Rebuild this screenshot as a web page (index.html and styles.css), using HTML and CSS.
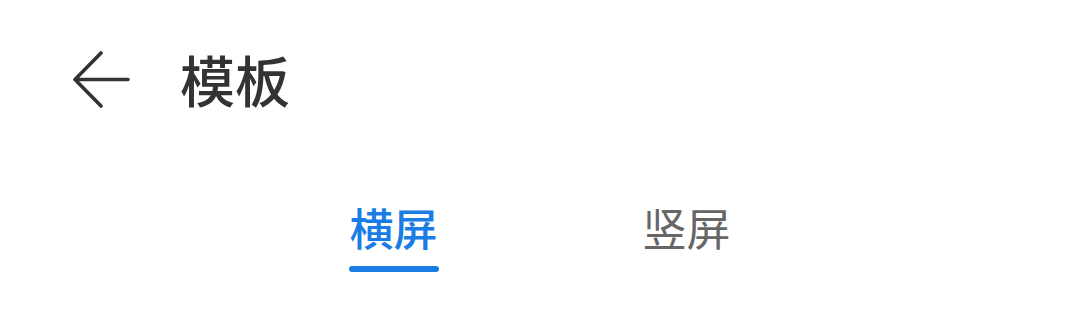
FILE: index.html
```html
<!DOCTYPE html>
<html lang="zh">
<head>
<meta charset="utf-8">
<link rel="stylesheet" href="styles.css">
</head>
<body>
<header class="toolbar">
  <button class="back" aria-label="返回">
    <svg width="60" height="60" viewBox="0 0 60 60">
      <path d="M29 5 L3 31.5 L29 58 M3 31.5 H56" fill="none" stroke="#333" stroke-width="3.6" stroke-linecap="round" stroke-linejoin="round"/>
    </svg>
  </button>
  <h1 class="title">模板</h1>
</header>
<nav class="tabs">
  <div class="tab active"><span class="label">横屏</span><span class="bar"></span></div>
  <div class="tab"><span class="label">竖屏</span><span class="bar"></span></div>
</nav>
</body>
</html>
```
FILE: styles.css
```css
html, body {
  margin: 0;
  padding: 0;
  background: #ffffff;
  width: 1080px;
  height: 319px;
  overflow: hidden;
  font-family: "Noto Sans CJK SC", "Noto Sans", sans-serif;
}
.toolbar {
  display: flex;
  align-items: center;
  height: 100px;
  padding: 28px 0 0 72px;
}
.back {
  border: 0;
  background: none;
  padding: 0;
  width: 60px;
  height: 60px;
  display: flex;
}
.title {
  margin: 0 0 0 48px;
  font-size: 55px;
  font-weight: 500;
  color: #333333;
  line-height: 60px;
  letter-spacing: 0;
}
.tabs {
  display: flex;
  width: 586px;
  margin: 74px auto 0;
}
.tab {
  flex: 1;
  display: flex;
  flex-direction: column;
  align-items: center;
}
.label {
  font-size: 44px;
  line-height: 50px;
  font-weight: 400;
  color: #666666;
}
.tab.active .label {
  color: #1a7de6;
  font-weight: 500;
}
.bar {
  width: 90px;
  height: 6px;
  border-radius: 3px;
  margin-top: 14px;
  background: transparent;
}
.tab.active .bar {
  background: #1a7de6;
}
```
